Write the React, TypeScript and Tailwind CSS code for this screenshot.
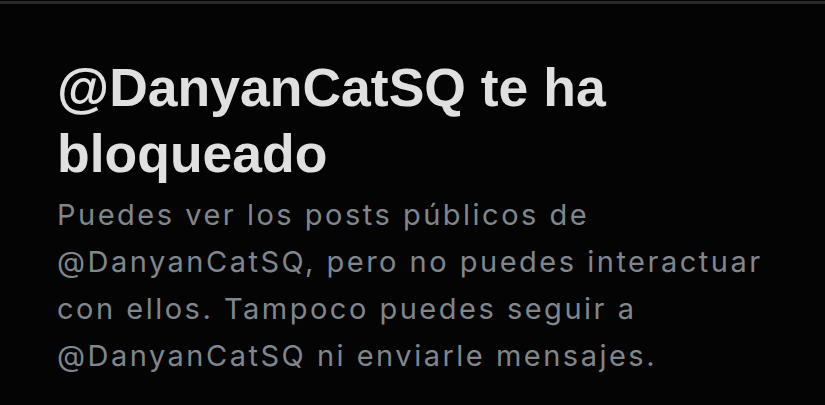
export default function App() {
  return (
    <div className="min-h-screen w-full bg-[#040404]">
      <div className="h-[4px] w-full border-t-[1px] border-[#040404] bg-[#2a2a2a]" />
      <div className="pl-[57px] pr-[30px] pt-[51px]">
        <h1 className="font-['Liberation_Sans',Arial,sans-serif] text-[53.5px] font-bold leading-[66px] text-[#e0e0e0]">
          @DanyanCatSQ te ha bloqueado
        </h1>
        <p className="mt-[4px] font-['Inter',sans-serif] text-[29px] leading-[47px] tracking-[2.5px] text-[#80868c]">
          Puedes ver los posts públicos de @DanyanCatSQ, pero no puedes interactuar con ellos. Tampoco puedes seguir a
          @DanyanCatSQ ni enviarle mensajes.
        </p>
      </div>
    </div>
  );
}
